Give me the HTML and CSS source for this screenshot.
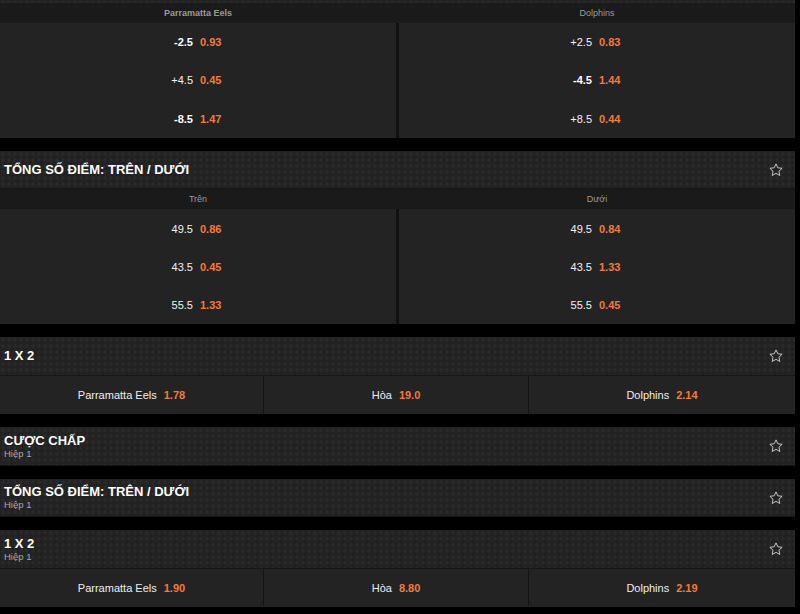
FILE: index.html
```html
<!DOCTYPE html>
<html lang="vi">
<head>
<meta charset="utf-8">
<link rel="stylesheet" href="styles.css">
</head>
<body>
<div class="page">
  <section class="market">
    <div class="hdr-partial"></div>
    <div class="colhead">
      <div class="bold">Parramatta Eels</div>
      <div>Dolphins</div>
    </div>
    <div class="grid2">
      <div class="col">
        <div class="row"><span class="num b">-2.5</span><span class="odd">0.93</span></div>
        <div class="row"><span class="num">+4.5</span><span class="odd">0.45</span></div>
        <div class="row"><span class="num b">-8.5</span><span class="odd">1.47</span></div>
      </div>
      <div class="col">
        <div class="row"><span class="num">+2.5</span><span class="odd">0.83</span></div>
        <div class="row"><span class="num b">-4.5</span><span class="odd">1.44</span></div>
        <div class="row"><span class="num">+8.5</span><span class="odd">0.44</span></div>
      </div>
    </div>
  </section>

  <section class="market">
    <div class="hdr">
      <div class="titles"><div class="title">TỔNG SỐ ĐIỂM: TRÊN / DƯỚI</div></div>
      <svg class="star" viewBox="0 0 24 24"><path d="M12 2.8l2.75 5.9 6.45.75-4.8 4.4 1.3 6.4L12 17l-5.7 3.25 1.3-6.4-4.8-4.4 6.45-.75z"/></svg>
    </div>
    <div class="colhead">
      <div>Trên</div>
      <div>Dưới</div>
    </div>
    <div class="grid2">
      <div class="col">
        <div class="row"><span class="num">49.5</span><span class="odd">0.86</span></div>
        <div class="row"><span class="num">43.5</span><span class="odd">0.45</span></div>
        <div class="row"><span class="num">55.5</span><span class="odd">1.33</span></div>
      </div>
      <div class="col">
        <div class="row"><span class="num">49.5</span><span class="odd">0.84</span></div>
        <div class="row"><span class="num">43.5</span><span class="odd">1.33</span></div>
        <div class="row"><span class="num">55.5</span><span class="odd">0.45</span></div>
      </div>
    </div>
  </section>

  <section class="market">
    <div class="hdr">
      <div class="titles"><div class="title">1 X 2</div></div>
      <svg class="star" viewBox="0 0 24 24"><path d="M12 2.8l2.75 5.9 6.45.75-4.8 4.4 1.3 6.4L12 17l-5.7 3.25 1.3-6.4-4.8-4.4 6.45-.75z"/></svg>
    </div>
    <div class="grid3">
      <div class="cell"><span class="name">Parramatta Eels</span><span class="odd">1.78</span></div>
      <div class="cell"><span class="name">Hòa</span><span class="odd">19.0</span></div>
      <div class="cell"><span class="name">Dolphins</span><span class="odd">2.14</span></div>
    </div>
  </section>

  <section class="market">
    <div class="hdr">
      <div class="titles"><div class="title">CƯỢC CHẤP</div><div class="sub">Hiệp 1</div></div>
      <svg class="star" viewBox="0 0 24 24"><path d="M12 2.8l2.75 5.9 6.45.75-4.8 4.4 1.3 6.4L12 17l-5.7 3.25 1.3-6.4-4.8-4.4 6.45-.75z"/></svg>
    </div>
  </section>

  <section class="market">
    <div class="hdr">
      <div class="titles"><div class="title">TỔNG SỐ ĐIỂM: TRÊN / DƯỚI</div><div class="sub">Hiệp 1</div></div>
      <svg class="star" viewBox="0 0 24 24"><path d="M12 2.8l2.75 5.9 6.45.75-4.8 4.4 1.3 6.4L12 17l-5.7 3.25 1.3-6.4-4.8-4.4 6.45-.75z"/></svg>
    </div>
  </section>

  <section class="market">
    <div class="hdr">
      <div class="titles"><div class="title">1 X 2</div><div class="sub">Hiệp 1</div></div>
      <svg class="star" viewBox="0 0 24 24"><path d="M12 2.8l2.75 5.9 6.45.75-4.8 4.4 1.3 6.4L12 17l-5.7 3.25 1.3-6.4-4.8-4.4 6.45-.75z"/></svg>
    </div>
    <div class="grid3">
      <div class="cell"><span class="name">Parramatta Eels</span><span class="odd">1.90</span></div>
      <div class="cell"><span class="name">Hòa</span><span class="odd">8.80</span></div>
      <div class="cell"><span class="name">Dolphins</span><span class="odd">2.19</span></div>
    </div>
  </section>
</div>
</body>
</html>
```

FILE: styles.css
```css
html, body {
  margin: 0;
  padding: 0;
  background: #000;
}
body {
  font-family: "Liberation Sans", Arial, sans-serif;
  color: #fff;
  width: 800px;
  height: 614px;
  overflow: hidden;
}
.page {
  width: 795px;
  display: flex;
  flex-direction: column;
  gap: 13px;
}
.hdr-partial,
.hdr {
  background-color: #222;
  background-image: radial-gradient(circle, #292929 1.4px, transparent 2.2px);
  background-size: 6px 6px;
}
.hdr-partial {
  height: 3px;
}
.hdr {
  height: 38.5px;
  display: flex;
  align-items: center;
  justify-content: space-between;
  padding: 0 11px 0 4px;
  box-sizing: border-box;
  border-bottom: 1px solid #161616;
}
.titles {
  display: flex;
  flex-direction: column;
}
.title {
  font-size: 13px;
  font-weight: bold;
  line-height: 14px;
  color: #fff;
}
.sub {
  font-size: 9.5px;
  line-height: 11px;
  color: #a8a8a8;
}
.star {
  width: 16px;
  height: 16px;
  fill: none;
  stroke: #cfcfcf;
  stroke-width: 1.4;
  stroke-linejoin: round;
}
.colhead {
  height: 20px;
  background: #1a1a1a;
  display: grid;
  grid-template-columns: 1fr 1fr;
  column-gap: 3px;
  align-items: center;
  text-align: center;
  font-size: 9px;
  color: #9a9a9a;
}
.colhead .bold {
  font-weight: bold;
}
.grid2 {
  display: grid;
  grid-template-columns: 1fr 1fr;
  column-gap: 3px;
  background: #111;
}
.col {
  background: #232323;
  display: flex;
  flex-direction: column;
}
.row {
  height: 38.33px;
  display: grid;
  grid-template-columns: 1fr 1fr;
  column-gap: 7px;
  align-items: center;
  font-size: 11px;
  padding-right: 3px;
}
.num {
  text-align: right;
  color: #f2f2f2;
}
.num.b {
  font-weight: bold;
  color: #fff;
}
.odd {
  color: #f5793b;
  font-weight: bold;
  font-size: 11px;
}
.grid3 {
  display: grid;
  grid-template-columns: 263px 1fr 266px;
  column-gap: 1px;
  background: #141414;
}
.cell {
  height: 38.5px;
  background: #232323;
  display: flex;
  align-items: center;
  justify-content: center;
  gap: 7px;
  font-size: 11px;
}
.name {
  color: #eee;
}
```
